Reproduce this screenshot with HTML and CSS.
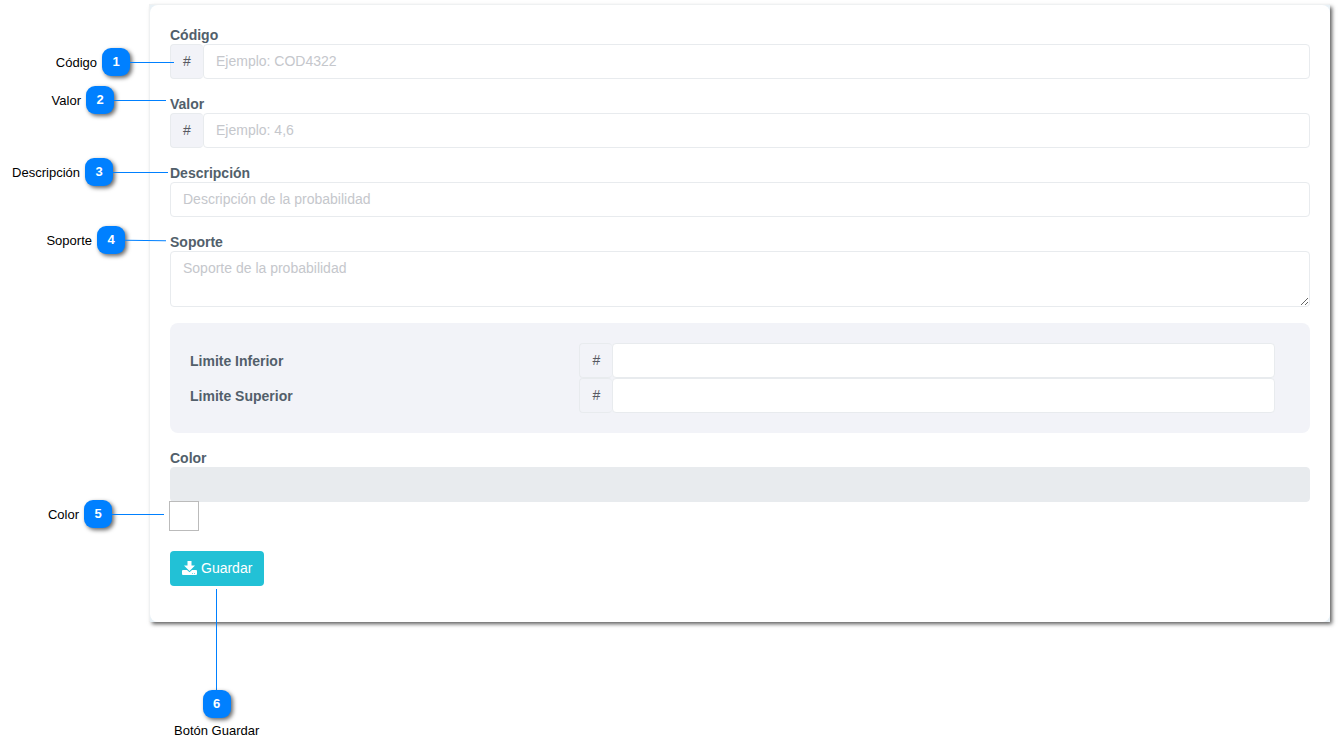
FILE: index.html
```html
<!DOCTYPE html>
<html lang="es">
<head>
  <meta charset="UTF-8" />
  <meta name="viewport" content="width=device-width, initial-scale=1" />
  <title>Probabilidad</title>
  <link rel="stylesheet" href="styles.css">
</head>
<body>
  <main class="page">
    <div class="frame">
      <form class="card">
        <div class="form-group">
          <label for="codigo">Código</label>
          <div class="input-group">
            <span class="addon">#</span>
            <input type="text" id="codigo" name="codigo" placeholder="Ejemplo: COD4322">
          </div>
        </div>

        <div class="form-group">
          <label for="valor">Valor</label>
          <div class="input-group">
            <span class="addon">#</span>
            <input type="text" id="valor" name="valor" placeholder="Ejemplo: 4,6">
          </div>
        </div>

        <div class="form-group">
          <label for="descripcion">Descripción</label>
          <input type="text" id="descripcion" name="descripcion" placeholder="Descripción de la probabilidad">
        </div>

        <div class="form-group">
          <label for="soporte">Soporte</label>
          <textarea id="soporte" name="soporte" placeholder="Soporte de la probabilidad"></textarea>
        </div>

        <div class="limits">
          <label for="inferior">Limite Inferior</label>
          <div class="input-group">
            <span class="addon">#</span>
            <input type="text" id="inferior" name="inferior">
          </div>
          <label for="superior">Limite Superior</label>
          <div class="input-group">
            <span class="addon">#</span>
            <input type="text" id="superior" name="superior">
          </div>
        </div>

        <div class="form-group">
          <label for="color">Color</label>
          <input type="text" id="color" name="color" readonly>
          <button type="button" class="swatch" aria-label="Color"></button>
        </div>

        <button type="submit" class="btn-save">
          <svg class="icon" viewBox="0 0 15 14" aria-hidden="true">
            <path fill="currentColor" d="M5.500 0h4v4.500h3.500L7.500 10 2 4.500h3.500z"/>
            <path fill="currentColor" fill-rule="evenodd" d="M1 9h4l2.500 2.300L10 9h4q1 0 1 1v3q0 1-1 1H1q-1 0-1-1v-3q0-1 1-1zM10 12v.7h.8V12zM12.200 12v.7h.8V12z"/>
          </svg>
          Guardar
        </button>
      </form>
    </div>

    <!-- Notas numeradas -->
    <div class="callout callout-1">Código <b>1</b><i></i></div>
    <div class="callout callout-2">Valor <b>2</b><i></i></div>
    <div class="callout callout-3">Descripción <b>3</b><i></i></div>
    <div class="callout callout-4">Soporte <b>4</b><i></i></div>
    <div class="callout callout-5">Color <b>5</b><i></i></div>
    <div class="callout callout-6"><i></i><b>6</b>Botón Guardar</div>
  </main>
</body>
</html>
```
FILE: styles.css
```css
* {
  box-sizing: border-box;
}

body {
  margin: 0;
  background-color: #fff;
  font-family: "Liberation Sans", Arial, sans-serif;
  font-size: 14px;
}

.page {
  position: relative;
  padding: 5px 9px 132px 150px;
}

.frame {
  background-color: #e9f1f6;
  box-shadow: -1px -1px 0 #eff1f2, 2px 2px 4px rgba(0, 0, 0, 0.65);
}

.card {
  padding: 21px 20px 36px;
  border-radius: 8px;
  background-color: #fff;
}

.form-group {
  margin-bottom: 16px;
}

label {
  display: block;
  padding-top: 1px;
  color: #525f6b;
  font-weight: bold;
  line-height: 17px;
}

input,
textarea {
  display: block;
  width: 100%;
  height: 35px;
  margin: 0;
  padding: 0 12px 2px;
  border: 1px solid #e8ebee;
  border-radius: 4px;
  background-color: #fff;
  color: #575962;
  font-family: inherit;
  font-size: 14px;
}

textarea {
  height: 56px;
  padding: 8px 12px;
  resize: vertical;
}

input[readonly] {
  background-color: #e8ebee;
}

::placeholder {
  color: #c5c7cc;
  opacity: 1;
}

.input-group {
  display: flex;
}

.input-group input {
  flex: 1;
  min-width: 0;
}

.addon {
  width: 33px;
  border: 1px solid #e8ebee;
  border-right: 0;
  border-radius: 4px;
  background-color: #f2f3f8;
  color: #575962;
  line-height: 33px;
  text-align: center;
}

.limits {
  display: grid;
  grid-template-columns: 14fr 25fr;
  align-items: center;
  margin: 16px 0;
  padding: 20px 35px 20px 20px;
  border-radius: 8px;
  background-color: #f2f3f8;
}

.swatch {
  display: block;
  width: 30px;
  height: 30px;
  margin: -1px 0 20px -1px;
  padding: 0;
  border: 1px solid #bbb;
  background-color: #fff;
}

.btn-save {
  display: flex;
  align-items: center;
  gap: 4px;
  height: 35px;
  padding: 0 12px 2px;
  border: 0;
  border-radius: 4px;
  background-color: #22c1d6;
  color: #fff;
  font-family: inherit;
  font-size: 14px;
  cursor: pointer;
}

.icon {
  width: 15px;
  height: 14px;
}

/* Notas sobre el formulario */
.callout {
  position: absolute;
  left: 0;
  display: flex;
  align-items: center;
  justify-content: flex-end;
  gap: 5px;
  color: #000;
  font-size: 13px;
  white-space: nowrap;
}

.callout b {
  width: 28px;
  height: 28px;
  border-radius: 9px;
  background-color: #0080ff;
  box-shadow: 2px 2px 4px rgba(0, 0, 0, 0.6);
  color: #fff;
  line-height: 28px;
  text-align: center;
}

.callout i {
  height: 1px;
  margin-left: -5px;
  background-color: #0080ff;
}

.callout-1 { top: 48px; width: 174px; }
.callout-2 { top: 86px; width: 166px; }
.callout-3 { top: 158px; width: 168px; }
.callout-4 { top: 226px; width: 166px; }
.callout-5 { top: 500px; width: 164px; }

.callout-1 i { width: 44px; }
.callout-2 i { width: 52px; }
.callout-3 i { width: 55px; }
.callout-4 i { width: 41px; transform: rotate(1deg); }
.callout-5 i { width: 52px; }

.callout-6 {
  top: 589px;
  left: 174px;
  flex-direction: column;
}

.callout-6 i {
  width: 1px;
  height: 101px;
  margin: 0 0 -5px;
}
```
